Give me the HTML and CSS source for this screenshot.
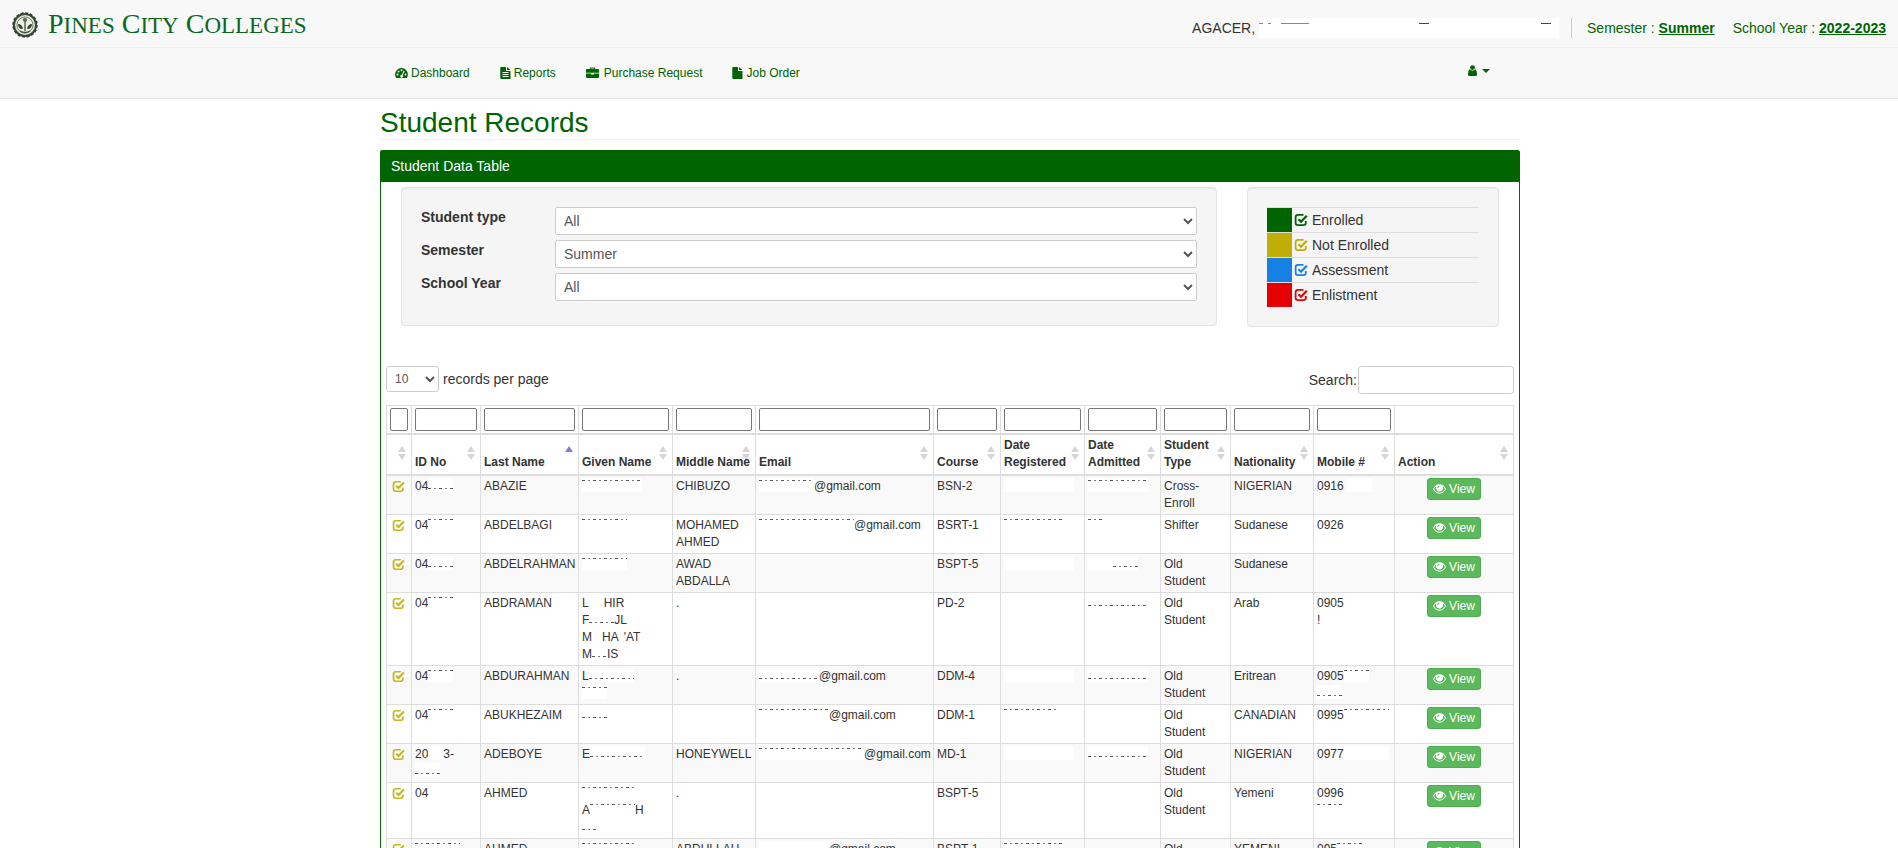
FILE: index.html
```html
<!DOCTYPE html>
<html lang="en">

<head>
    <meta charset="UTF-8">
    <meta name="viewport" content="width=device-width, initial-scale=1.0">
    <title>Student Records</title>
    <link rel="stylesheet" href="styles.css">
</head>

<body>

    <svg class="sprite" aria-hidden="true">
        <symbol id="icon-check" viewBox="0 0 14 14">
            <path d="M9.500 1.900H4Q1.600 1.900 1.600 4.300V9.700Q1.600 12.100 4 12.100H9.400Q11.800 12.100 11.800 9.700V8" fill="none" stroke="currentColor" stroke-width="1.800" />
            <path d="M4.500 6.200L7 8.700L12.800 2.700" fill="none" stroke="currentColor" stroke-width="2.200" />
        </symbol>
        <symbol id="icon-eye" viewBox="0 0 14 12">
            <path fill-rule="evenodd" d="M7 1C3.800 1 1.300 3.200 0 6c1.300 2.800 3.800 5 7 5s5.700-2.200 7-5C12.700 3.200 10.200 1 7 1zM3.600 3.200C3.300 3.800 3.200 4.400 3.200 5c0 2.100 1.700 3.800 3.800 3.800S10.800 7.100 10.800 5c0-.6-.1-1.200-.4-1.800 1 .6 1.900 1.600 2.500 2.800-1.200 2.300-3.300 4-5.900 4S2.300 8.300 1.100 6c.6-1.200 1.500-2.200 2.500-2.800zM7 2.600c-1.300 0-2.300 1-2.300 2.300h1.100C5.800 4.200 6.300 3.700 7 3.700z" />
        </symbol>
    </svg>

    <header class="site-header">
        <div class="topbar">
            <a class="brand" href="#">
                <svg width="26" height="26" viewBox="0 0 26 26">
                    <circle cx="13" cy="13" r="11" fill="#dfe5da" stroke="#3a4a36" stroke-width="2" />
                    <circle cx="13" cy="13" r="12" fill="none" stroke="#2f4030" stroke-width="1.500" stroke-dasharray="3 1.700" />
                    <circle cx="13" cy="13" r="8" fill="#eef0e9" stroke="#77856f" />
                    <path d="M13 6v13M11 8h4M8 19q5 3 10 0" stroke="#43533c" fill="none" stroke-width="1.300" />
                    <path d="M6 12q4 0 5 5q-5 0-5-5zM20 12q-4 0-5 5q5 0 5-5z" fill="#2d4428" />
                    <circle cx="13" cy="8" r="2" fill="#5c7050" />
                </svg>
                <span class="brand-name">P<small>INES</small> C<small>ITY</small> C<small>OLLEGES</small></span>
            </a>
            <div class="session">
                <span class="session-user">AGACER, <span class="mask mask-name"></span></span>
                <span class="session-item">Semester : <a href="#">Summer</a></span>
                <span class="session-item">School Year : <a href="#">2022-2023</a></span>
            </div>
        </div>
        <nav class="container navbar">
            <a href="#">
                <svg width="13" height="12" viewBox="0 0 13 12"><path d="M6.500 1A6.500 6.500 0 0 0 1.200 11h10.600A6.500 6.500 0 0 0 6.500 1z" /><g fill="#f8f8f8"><circle cx="2.500" cy="7.500" r="1" /><circle cx="3.600" cy="4.400" r="1" /><circle cx="6.500" cy="3.200" r="1" /><circle cx="10.500" cy="7.500" r="1" /><path d="M8.800 3.500l.9.400-2 4.300a1.400 1.400 0 1 1-.9-.4z" /></g></svg>
                Dashboard
            </a>
            <a href="#">
                <svg width="11" height="12" viewBox="0 0 11 12"><path d="M1 0h5v4h4.500v8H1q-.7 0-.7-.7V.7Q.3 0 1 0zM7 0l3.500 3H7z" /><path d="M2.500 5.500h6M2.500 7.500h6M2.500 9.500h6" stroke="#f8f8f8" /></svg>
                Reports
            </a>
            <a href="#">
                <svg width="13" height="12" viewBox="0 0 13 12"><path d="M4 2V.5h5V2h3q1 0 1 1v2.700H0V3q0-1 1-1zm1 0h3v-.6H5zM0 6.500h5v1h3v-1h5V10q0 1-1 1H1q-1 0-1-1z" /></svg>
                <span class="nav-wide">Purchase Request</span>
            </a>
            <a href="#">
                <svg width="11" height="12" viewBox="0 0 11 12"><path d="M1 0h5v4h4.500v8H1q-.7 0-.7-.7V.7Q.3 0 1 0zM7 0l3.500 3H7z" /></svg>
                Job Order
            </a>
            <button type="button" class="user-menu" aria-label="Account">
                <svg width="9" height="11" viewBox="0 0 9 11"><circle cx="4.500" cy="2.600" r="2.400" /><path d="M1.800 4.300Q4.500 7 7.200 4.300Q9 5.500 9 9v.5Q9 11 7.500 11h-6Q0 11 0 9.500V9q0-3.500 1.800-4.700z" /></svg>
                <span class="caret"></span>
            </button>
        </nav>
    </header>

    <main class="container">
        <h1>Student Records</h1>

        <section class="panel">
            <h2 class="panel-heading">Student Data Table</h2>
            <div class="panel-body">

                <div class="filters">
                    <div class="filters-main">
                        <form class="well">
                            <div class="form-row">
                                <label for="student-type">Student type</label>
                                <select id="student-type"><option>All</option></select>
                            </div>
                            <div class="form-row">
                                <label for="semester">Semester</label>
                                <select id="semester"><option>Summer</option></select>
                            </div>
                            <div class="form-row">
                                <label for="school-year">School Year</label>
                                <select id="school-year"><option>All</option></select>
                            </div>
                        </form>
                    </div>
                    <div class="filters-side">
                        <ul class="well legend">
                            <li class="enrolled"><svg class="check"><use href="#icon-check" /></svg><span>Enrolled</span></li>
                            <li class="not-enrolled"><svg class="check"><use href="#icon-check" /></svg><span>Not Enrolled</span></li>
                            <li class="assessment"><svg class="check"><use href="#icon-check" /></svg><span>Assessment</span></li>
                            <li class="enlistment"><svg class="check"><use href="#icon-check" /></svg><span>Enlistment</span></li>
                        </ul>
                    </div>
                </div>

                <div class="table-tools">
                    <label class="page-size"><select><option>10</option></select> records per page</label>
                    <label class="search">Search:<input type="search"></label>
                </div>

                <table class="records">
                    <colgroup>
                        <col class="col-status">
                        <col class="col-id">
                        <col class="col-last">
                        <col class="col-given">
                        <col class="col-middle">
                        <col class="col-email">
                        <col class="col-course">
                        <col class="col-registered">
                        <col class="col-admitted">
                        <col class="col-type">
                        <col class="col-nationality">
                        <col class="col-mobile">
                        <col>
                    </colgroup>
                    <thead>
                        <tr class="column-filters">
                            <td><input type="text" aria-label="Status"></td>
                            <td><input type="text" aria-label="ID No"></td>
                            <td><input type="text" aria-label="Last Name"></td>
                            <td><input type="text" aria-label="Given Name"></td>
                            <td><input type="text" aria-label="Middle Name"></td>
                            <td><input type="text" aria-label="Email"></td>
                            <td><input type="text" aria-label="Course"></td>
                            <td><input type="text" aria-label="Date Registered"></td>
                            <td><input type="text" aria-label="Date Admitted"></td>
                            <td><input type="text" aria-label="Student Type"></td>
                            <td><input type="text" aria-label="Nationality"></td>
                            <td><input type="text" aria-label="Mobile #"></td>
                            <td></td>
                        </tr>
                        <tr>
                            <th></th>
                            <th>ID No</th>
                            <th class="sorted">Last Name</th>
                            <th>Given Name</th>
                            <th>Middle Name</th>
                            <th>Email</th>
                            <th>Course</th>
                            <th>Date<br>Registered</th>
                            <th>Date<br>Admitted</th>
                            <th>Student<br>Type</th>
                            <th>Nationality</th>
                            <th>Mobile #</th>
                            <th>Action</th>
                        </tr>
                    </thead>
                    <tbody>
                        <tr>
                            <td><svg class="check"><use href="#icon-check" /></svg></td>
                            <td>04<span class="mask low w-25"></span></td>
                            <td>ABAZIE</td>
                            <td><span class="mask w-60"></span></td>
                            <td>CHIBUZO</td>
                            <td><span class="mask w-55"></span>@gmail.com</td>
                            <td>BSN-2</td>
                            <td><span class="mask blank w-70"></span></td>
                            <td><span class="mask w-60"></span></td>
                            <td>Cross-<br>Enroll</td>
                            <td>NIGERIAN</td>
                            <td>0916 <span class="mask blank w-25"></span></td>
                            <td><button type="button" class="view-btn"><svg><use href="#icon-eye" /></svg> View</button></td>
                        </tr>
                        <tr>
                            <td><svg class="check"><use href="#icon-check" /></svg></td>
                            <td>04<span class="mask w-25"></span></td>
                            <td>ABDELBAGI</td>
                            <td><span class="mask w-45"></span></td>
                            <td>MOHAMED AHMED</td>
                            <td><span class="mask w-95"></span>@gmail.com</td>
                            <td>BSRT-1</td>
                            <td><span class="mask w-60"></span></td>
                            <td><span class="mask w-15"></span></td>
                            <td>Shifter</td>
                            <td>Sudanese</td>
                            <td>0926<span class="mask blank w-25"></span></td>
                            <td><button type="button" class="view-btn"><svg><use href="#icon-eye" /></svg> View</button></td>
                        </tr>
                        <tr>
                            <td><svg class="check"><use href="#icon-check" /></svg></td>
                            <td>04<span class="mask low w-25"></span></td>
                            <td>ABDELRAHMAN</td>
                            <td><span class="mask w-45"></span></td>
                            <td>AWAD ABDALLA</td>
                            <td></td>
                            <td>BSPT-5</td>
                            <td><span class="mask blank w-70"></span></td>
                            <td><span class="mask blank w-25"></span><span class="mask low w-25"></span></td>
                            <td>Old<br>Student</td>
                            <td>Sudanese</td>
                            <td></td>
                            <td><button type="button" class="view-btn"><svg><use href="#icon-eye" /></svg> View</button></td>
                        </tr>
                        <tr>
                            <td><svg class="check"><use href="#icon-check" /></svg></td>
                            <td>04<span class="mask w-25"></span></td>
                            <td>ABDRAMAN</td>
                            <td>L<span class="mask blank w-15"></span>HIR<br>F<span class="mask low w-25"></span>JL<br>M<span class="mask blank w-10"></span>HA<span class="mask blank w-5"></span>'AT<br>M<span class="mask low w-15"></span>IS</td>
                            <td>.</td>
                            <td></td>
                            <td>PD-2</td>
                            <td></td>
                            <td><span class="mask low w-60"></span></td>
                            <td>Old<br>Student</td>
                            <td>Arab</td>
                            <td>0905<br>!</td>
                            <td><button type="button" class="view-btn"><svg><use href="#icon-eye" /></svg> View</button></td>
                        </tr>
                        <tr>
                            <td><svg class="check"><use href="#icon-check" /></svg></td>
                            <td>04<span class="mask w-25"></span></td>
                            <td>ABDURAHMAN</td>
                            <td>L<span class="mask low w-45"></span><br><span class="mask w-25"></span></td>
                            <td>.</td>
                            <td><span class="mask low w-60"></span>@gmail.com</td>
                            <td>DDM-4</td>
                            <td><span class="mask blank w-70"></span></td>
                            <td><span class="mask low w-60"></span></td>
                            <td>Old<br>Student</td>
                            <td>Eritrean</td>
                            <td>0905<span class="mask w-25"></span><br><span class="mask low w-25"></span></td>
                            <td><button type="button" class="view-btn"><svg><use href="#icon-eye" /></svg> View</button></td>
                        </tr>
                        <tr>
                            <td><svg class="check"><use href="#icon-check" /></svg></td>
                            <td>04<span class="mask w-25"></span></td>
                            <td>ABUKHEZAIM</td>
                            <td><span class="mask low w-25"></span></td>
                            <td></td>
                            <td><span class="mask w-70"></span>@gmail.com</td>
                            <td>DDM-1</td>
                            <td><span class="mask w-55"></span></td>
                            <td></td>
                            <td>Old<br>Student</td>
                            <td>CANADIAN</td>
                            <td>0995<span class="mask w-45"></span></td>
                            <td><button type="button" class="view-btn"><svg><use href="#icon-eye" /></svg> View</button></td>
                        </tr>
                        <tr>
                            <td><svg class="check"><use href="#icon-check" /></svg></td>
                            <td>20<span class="mask blank w-15"></span>3-<br><span class="mask low w-25"></span></td>
                            <td>ADEBOYE</td>
                            <td>E<span class="mask low w-55"></span></td>
                            <td>HONEYWELL</td>
                            <td><span class="mask w-105"></span>@gmail.com</td>
                            <td>MD-1</td>
                            <td><span class="mask blank w-70"></span></td>
                            <td><span class="mask low w-60"></span></td>
                            <td>Old<br>Student</td>
                            <td>NIGERIAN</td>
                            <td>0977<span class="mask blank w-45"></span></td>
                            <td><button type="button" class="view-btn"><svg><use href="#icon-eye" /></svg> View</button></td>
                        </tr>
                        <tr>
                            <td><svg class="check"><use href="#icon-check" /></svg></td>
                            <td>04</td>
                            <td>AHMED</td>
                            <td><span class="mask w-55"></span><br>A<span class="mask w-45"></span>H<br><span class="mask low w-15"></span></td>
                            <td>.</td>
                            <td></td>
                            <td>BSPT-5</td>
                            <td></td>
                            <td></td>
                            <td>Old<br>Student</td>
                            <td>Yemeni</td>
                            <td>0996<br><span class="mask w-25"></span></td>
                            <td><button type="button" class="view-btn"><svg><use href="#icon-eye" /></svg> View</button></td>
                        </tr>
                        <tr>
                            <td><svg class="check"><use href="#icon-check" /></svg></td>
                            <td><span class="mask w-45"></span></td>
                            <td>AHMED</td>
                            <td><span class="mask w-55"></span></td>
                            <td>ABDULLAH</td>
                            <td><span class="mask blank w-70"></span>@gmail.com</td>
                            <td>BSPT-1</td>
                            <td><span class="mask w-60"></span></td>
                            <td></td>
                            <td>Old<br>Student</td>
                            <td>YEMENI</td>
                            <td>095<span class="mask w-25"></span></td>
                            <td><button type="button" class="view-btn"><svg><use href="#icon-eye" /></svg> View</button></td>
                        </tr>
                    </tbody>
                </table>

            </div>
        </section>
    </main>

</body>

</html>
```

FILE: styles.css
```css
* {
    box-sizing: border-box;
}

body {
    margin: 0;
    font-family: "Liberation Sans", Arial, sans-serif;
    font-size: 14px;
    line-height: 20px;
    color: #333;
    background-color: #fff;
}

a {
    color: #006400;
}

svg {
    fill: currentColor;
}

select,
input,
button {
    font-family: inherit;
}

.sprite {
    display: none;
}

.container {
    max-width: 1142px;
    margin: 0 auto;
    padding-left: 2px;
}

/* header */
.site-header {
    background-color: #f8f8f8;
    border-bottom: 1px solid #e1e1e1;
}

.topbar {
    display: flex;
    justify-content: space-between;
    align-items: center;
    height: 48px;
    padding: 3px 12px 0;
    border-bottom: 1px solid #eee;
}

.brand {
    display: flex;
    align-items: center;
    gap: 10px;
    text-decoration: none;
    color: #0b6623;
}

.brand-name {
    font-family: "Liberation Serif", "Times New Roman", serif;
    font-size: 28px;
    line-height: 28px;
}

.brand-name small {
    font-size: 23px;
}

.session {
    display: flex;
    align-items: center;
    gap: 18px;
    padding-top: 6px;
    color: #006400;
}

.session-user {
    color: #333;
    padding-right: 12px;
    margin-right: -3px;
    border-right: 1px solid #ccc;
}

.session a {
    font-weight: bold;
}

.navbar {
    display: flex;
    align-items: center;
    height: 50px;
    font-size: 12px;
}

.navbar a {
    display: flex;
    align-items: center;
    gap: 3px;
    padding: 0 15px;
    text-decoration: none;
}

.nav-wide {
    padding-left: 2px;
}

.user-menu {
    display: flex;
    align-items: center;
    gap: 5px;
    margin-left: auto;
    padding: 0 30px 5px 15px;
    border: none;
    background: none;
    color: #006400;
}

.caret {
    border-top: 4px solid;
    border-left: 4px solid transparent;
    border-right: 4px solid transparent;
}

h1 {
    margin: 8px 0 10px;
    border-bottom: 1px solid #f2f2f2;
    font-size: 28px;
    font-weight: normal;
    line-height: 32px;
    color: #006400;
}

/* panel */
.panel {
    border: 1px solid #006400;
    border-radius: 2px;
}

.panel-heading {
    margin: 0;
    padding: 5px 10px 6px;
    background-color: #006400;
    color: #fff;
    font-size: 14px;
    font-weight: normal;
}

.panel-body {
    padding: 5px;
}

.filters {
    display: flex;
}

.filters-main {
    width: 75%;
    padding: 0 15px;
}

.filters-side {
    width: 25%;
    padding: 0 15px;
}

.well {
    margin: 0;
    padding: 19px;
    background-color: #f5f5f5;
    border: 1px solid #e3e3e3;
    border-radius: 4px;
    box-shadow: inset 0 1px 1px rgba(0, 0, 0, 0.05);
}

.form-row {
    display: flex;
    align-items: flex-start;
    height: 33px;
}

.form-row label {
    width: 134px;
    font-weight: bold;
}

.form-row select {
    flex: 1;
    height: 28px;
    padding: 0 4px;
    border: 1px solid #ccc;
    border-radius: 2px;
    background-color: #fff;
    color: #555;
    font-size: 14px;
}

.legend {
    list-style: none;
}

.legend li {
    display: flex;
    align-items: center;
    gap: 4px;
    height: 25px;
    border-top: 1px solid #ddd;
}

.legend li::before {
    content: "";
    width: 25px;
    height: 24px;
    margin-right: -2px;
    background-color: currentColor;
}

.legend span {
    color: #333;
}

.check {
    width: 14px;
    height: 14px;
}

.enrolled {
    color: #006400;
}

.not-enrolled {
    color: #c1ad08;
}

.assessment {
    color: #1780e3;
}

.enlistment {
    color: #e60000;
}

.table-tools {
    display: flex;
    justify-content: space-between;
    align-items: flex-start;
    margin: 39px 0 11px;
}

.table-tools label {
    display: flex;
    align-items: center;
}

.page-size {
    gap: 4px;
}

.page-size select {
    width: 53px;
    height: 26px;
    padding: 0 4px;
    border: 1px solid #ccc;
    border-radius: 3px;
    background-color: #fff;
    color: #555;
    font-size: 12px;
}

.search {
    gap: 1px;
}

.search input {
    width: 156px;
    height: 28px;
    border: 1px solid #ccc;
    border-radius: 3px;
}

/* records */
.records {
    width: 100%;
    table-layout: fixed;
    border-collapse: collapse;
    font-size: 12px;
    line-height: 17px;
}

.col-status { width: 25px; }
.col-id { width: 69px; }
.col-last { width: 98px; }
.col-given { width: 94px; }
.col-middle { width: 83px; }
.col-email { width: 178px; }
.col-course { width: 67px; }
.col-registered { width: 84px; }
.col-admitted { width: 76px; }
.col-type { width: 70px; }
.col-nationality { width: 83px; }
.col-mobile { width: 81px; }

.records th,
.records td {
    padding: 2px 3px;
    border: 1px solid #ddd;
    text-align: left;
    vertical-align: top;
}

.records th {
    position: relative;
    padding-bottom: 3px;
    border-top: 2px solid #ddd;
    border-bottom: 2px solid #ddd;
    vertical-align: bottom;
    white-space: nowrap;
}

.records th::before,
.records th::after {
    content: "";
    position: absolute;
    z-index: -1;
    top: 11px;
    right: 5px;
    border: 4px solid transparent;
    border-top-width: 0;
    border-bottom: 6px solid #d5d5d5;
}

.records th::after {
    top: 19px;
    border-top: 6px solid #d5d5d5;
    border-bottom-width: 0;
}

.records th.sorted::before {
    border-bottom-color: #8080c8;
}

.records th.sorted::after {
    display: none;
}

.records tbody tr:nth-child(odd) {
    background-color: #f9f9f9;
}

.records tbody td:first-child {
    padding-left: 5px;
    color: #c1b71e;
}

.records tbody td:nth-child(6) {
    white-space: nowrap;
}

.records tbody .check {
    display: block;
    margin-top: 2px;
    width: 13px;
    height: 13px;
}

.records td:last-child {
    text-align: center;
}

.column-filters input {
    display: block;
    width: 100%;
    height: 23px;
    border: 1px solid #767676;
    border-radius: 2px;
}

.view-btn {
    display: inline-flex;
    align-items: center;
    gap: 3px;
    height: 22px;
    padding: 0 5px;
    border: 1px solid #4cae4c;
    border-radius: 3px;
    background-color: #5cb85c;
    color: #fff;
    font-size: 12px;
    vertical-align: top;
    cursor: pointer;
}

.view-btn:hover {
    background-color: #449d44;
}

.view-btn svg {
    width: 13px;
    height: 12px;
}

/* hidden personal data */
.mask {
    display: inline-block;
    height: 14px;
    background: repeating-linear-gradient(90deg, #555 0 3px, #fff 3px 6px, #777 6px 8px, #fff 8px 11px) 0 2px / 100% 1px no-repeat #fff;
    vertical-align: top;
}

.mask.low {
    background-position: 0 10px;
}

.mask.blank {
    background: #fff;
}

.mask-name {
    width: 300px;
    height: 20px;
    background: linear-gradient(90deg, #888 0 4px, #fff 4px 9px, #888 9px 12px, #fff 12px 22px, #888 22px 50px, #fff 50px 160px, #444 160px 170px, #fff 170px 282px, #444 282px 292px, #fff 292px) 0 5px / 100% 1px no-repeat #fff;
}

.w-5 { width: 5px; }
.w-10 { width: 10px; }
.w-15 { width: 15px; }
.w-25 { width: 25px; }
.w-45 { width: 45px; }
.w-55 { width: 55px; }
.w-60 { width: 60px; }
.w-70 { width: 70px; }
.w-95 { width: 95px; }
.w-105 { width: 105px; }
```
